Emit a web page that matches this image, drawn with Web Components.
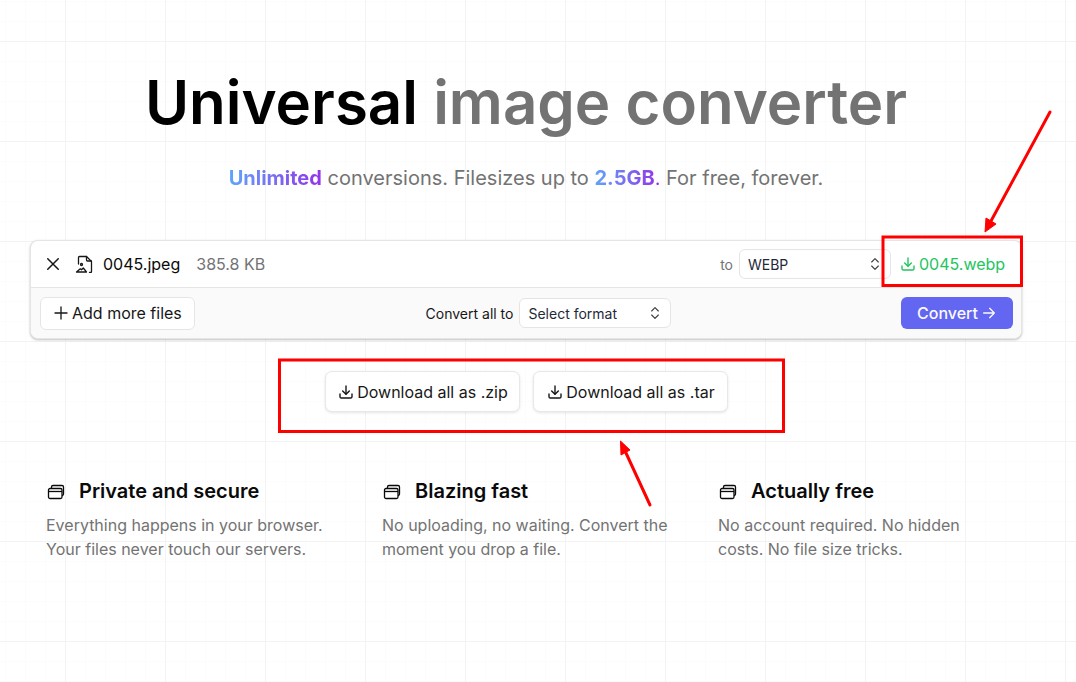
<!doctype html>
<html>
<head>
<meta charset="utf-8">
<title>Universal image converter</title>
<style>
  html, body { margin: 0; height: 100%; }
  body {
    width: 1076px;
    height: 682px;
    overflow: hidden;
    position: relative;
    background-color: #fff;
    background-image:
      linear-gradient(#f3f3f3 1px, transparent 1px),
      linear-gradient(90deg, #f3f3f3 1px, transparent 1px),
      linear-gradient(#fcfcfc 1px, transparent 1px),
      linear-gradient(90deg, #fcfcfc 1px, transparent 1px);
    background-size: 100px 100px, 100px 100px, 20px 20px, 20px 20px;
    background-position: 0 41px, 65px 0, 0 1px, 5px 0;
    font-family: Inter, "Liberation Sans", sans-serif;
    color: #0a0a0a;
  }
  main { width: 992px; margin-left: 30px; display: flex; flex-direction: column; }
</style>
</head>
<body>
<main>
  <uc-hero></uc-hero>
  <uc-file-card></uc-file-card>
  <uc-downloads></uc-downloads>
  <div style="display:grid;grid-template-columns:repeat(3,336px);padding:0 0 0 16px;margin-top:65px">
    <uc-feature title-text="Private and secure">Everything happens in your browser.<br>Your files never touch our servers.</uc-feature>
    <uc-feature title-text="Blazing fast">No uploading, no waiting. Convert the<br>moment you drop a file.</uc-feature>
    <uc-feature title-text="Actually free">No account required. No hidden<br>costs. No file size tricks.</uc-feature>
  </div>
</main>
<uc-annotations></uc-annotations>

<script>
  const downloadIcon = (size) => `<svg width="${size}" height="${size}" viewBox="0 0 24 24" fill="none" stroke="currentColor" stroke-width="2.1" stroke-linecap="round" stroke-linejoin="round"><path d="M12 3v12"/><path d="M7 10.5l5 5 5-5"/><path d="M3 15v4a2 2 0 0 0 2 2h14a2 2 0 0 0 2-2v-4"/></svg>`;

  class UcHero extends HTMLElement {
    constructor() {
      super();
      this.attachShadow({mode: 'open'}).innerHTML = `
        <style>
          :host { display: block; text-align: center; height: 240px; }
          h1 { margin: 0; padding-top: 63px; font-size: 60px; line-height: 78px; font-weight: 600; color: #000; }
          h1 span { color: #737373; }
          p { margin: 0; padding-top: 23px; font-size: 20px; line-height: 28px; color: #737373; }
          b { font-weight: 700; background: linear-gradient(90deg, #60a5fa, #9333ea); -webkit-background-clip: text; background-clip: text; color: transparent; }
          i { font-style: normal; font-weight: 400; }
        </style>
        <h1>Universal <span>image converter</span></h1>
        <p><b>Unlimited</b> conversions. Filesizes up to <b>2.5GB<i>.</i></b> For free, forever.</p>`;
    }
  }

  class UcSelect extends HTMLElement {
    constructor() {
      super();
      this.attachShadow({mode: 'open'}).innerHTML = `
        <style>
          :host { display: flex; align-items: center; justify-content: space-between; box-sizing: border-box; width: 152px; height: 30px; padding: 0 7px 0 8px; background: #fff; border: 1px solid #e5e5e5; border-radius: 6px; font-size: 14px; color: #1f2937; }
          svg { display: block; }
        </style>
        <slot></slot>
        <svg width="16" height="16" viewBox="0 0 24 24" fill="none" stroke="#404040" stroke-width="1.75" stroke-linecap="round" stroke-linejoin="round"><path d="M7 15l5 5 5-5"/><path d="M7 9l5-5 5 5"/></svg>`;
    }
  }

  class UcFileCard extends HTMLElement {
    constructor() {
      super();
      this.attachShadow({mode: 'open'}).innerHTML = `
        <style>
          :host { display: block; box-sizing: border-box; height: 99px; background: #fff; border: 1px solid #e5e5e5; border-radius: 8px; box-shadow: 0 1px 3px rgba(0,0,0,.16), 0 1px 2px rgba(0,0,0,.1); overflow: hidden; }
          .row { display: flex; align-items: center; }
          .file { height: 46px; padding: 0 7px 0 13px; }
          .file svg { display: block; flex: none; }
          .name { font-size: 16px; margin-left: 10px; color: #0a0a0a; }
          .size { font-size: 16px; margin-left: 16px; color: #737373; }
          .to { font-size: 14px; margin-left: auto; margin-right: 6px; color: #737373; }
          .link { display: flex; align-items: center; gap: 3px; width: 123px; padding-left: 9px; font-size: 16px; color: #22c55e; box-sizing: border-box; }
          .bar { height: 51px; background: #fafafa; border-top: 1px solid #e5e5e5; padding: 0 8px 0 9px; justify-content: space-between; box-sizing: border-box; }
          .add { display: flex; align-items: center; gap: 3px; box-sizing: border-box; width: 155px; height: 33px; padding-left: 12px; background: #fff; border: 1px solid #e5e5e5; border-radius: 6px; font-size: 16px; color: #171717; }
          .all { display: flex; align-items: center; gap: 6px; margin-left: 1px; font-size: 14px; color: #171717; }
          .go { display: flex; align-items: center; justify-content: center; gap: 3px; width: 112px; height: 32px; border-radius: 6px; background: #6366f1; color: #fafafa; font-size: 16px; font-weight: 500; }
        </style>
        <div class="row file">
          <svg width="18" height="18" viewBox="0 0 24 24" fill="none" stroke="#171717" stroke-width="2" stroke-linecap="round"><path d="M5 5l14 14M19 5L5 19"/></svg>
          <svg style="margin-left:13px" width="18" height="18" viewBox="0 0 18 18" fill="none" stroke="#171717" stroke-width="1.3" stroke-linecap="round" stroke-linejoin="round"><path d="M3.5 9V2.5a1 1 0 0 1 1-1h7l5 5v10a1 1 0 0 1-1 1h-1"/><path d="M11.5 1.5V5a1 1 0 0 0 1 1h4"/><circle cx="6.5" cy="9.5" r="1"/><path d="M1.5 17h10l-3.2-4-1.8 1.8-1.2-1z"/></svg>
          <span class="name">0045.jpeg</span>
          <span class="size">385.8 KB</span>
          <span class="to">to</span>
          <uc-select>WEBP</uc-select>
          <span class="link">${downloadIcon(16)}0045.webp</span>
        </div>
        <div class="row bar">
          <div class="add"><svg width="16" height="16" viewBox="0 0 24 24" fill="none" stroke="#171717" stroke-width="2" stroke-linecap="round"><path d="M12 3v18M3 12h18"/></svg>Add more files</div>
          <div class="all">Convert all to <uc-select>Select format</uc-select></div>
          <div class="go">Convert <svg width="16" height="16" viewBox="0 0 24 24" fill="none" stroke="currentColor" stroke-width="2" stroke-linecap="round" stroke-linejoin="round"><path d="M4 12h16M13 5l7 7-7 7"/></svg></div>
        </div>`;
    }
  }

  class UcDownloads extends HTMLElement {
    constructor() {
      super();
      this.attachShadow({mode: 'open'}).innerHTML = `
        <style>
          :host { display: flex; justify-content: center; gap: 13px; margin-top: 32px; }
          .b { display: flex; align-items: center; gap: 3px; box-sizing: border-box; width: 195px; height: 41px; padding-left: 2px; justify-content: center; background: #fff; border: 1px solid #e8e8e8; border-radius: 7px; box-shadow: 0 1px 3px rgba(0,0,0,.1); font-size: 16px; color: #171717; }
        </style>
        <div class="b">${downloadIcon(16)}Download all as .zip</div>
        <div class="b">${downloadIcon(16)}Download all as .tar</div>`;
    }
  }

  class UcFeature extends HTMLElement {
    constructor() {
      super();
      const title = this.getAttribute('title-text');
      this.attachShadow({mode: 'open'}).innerHTML = `
        <style>
          :host { display: block; }
          h3 { display: flex; align-items: center; gap: 13px; margin: 0; font-size: 20px; line-height: 28px; font-weight: 600; color: #0a0a0a; }
          p { margin: 8px 0 0; font-size: 16px; line-height: 24px; color: #737373; }
          svg { display: block; flex: none; }
        </style>
        <h3><svg width="20" height="18" viewBox="0 0 20 18" fill="none" stroke="#0a0a0a" stroke-width="1.3" stroke-linejoin="round"><rect x="2.5" y="6.5" width="13.5" height="10" rx="1.5"/><path d="M2.5 9.5H16"/><path d="M5.5 6V5a1.5 1.5 0 0 1 1.5-1.5h9A1.5 1.5 0 0 1 17.5 5v7a1.5 1.5 0 0 1-1.5 1.5"/></svg>${title}</h3>
        <p><slot></slot></p>`;
    }
  }

  class UcAnnotations extends HTMLElement {
    constructor() {
      super();
      this.attachShadow({mode: 'open'}).innerHTML = `
        <style>
          :host { position: absolute; left: 0; top: 0; width: 1076px; height: 682px; pointer-events: none; }
          svg { display: block; }
        </style>
        <svg width="1076" height="682" fill="none" stroke="#f00" stroke-width="3">
          <rect x="883" y="237" width="138.5" height="48.5"/>
          <rect x="279.5" y="360" width="504" height="71.5"/>
          <path d="M1050 112L991 221" stroke-linecap="round"/>
          <path d="M985 232l1-14 10 6z" fill="#f00" stroke-width="1"/>
          <path d="M650 505L626 453" stroke-linecap="round"/>
          <path d="M620.5 441l.5 14 9-5z" fill="#f00" stroke-width="1"/>
        </svg>`;
    }
  }

  customElements.define('uc-hero', UcHero);
  customElements.define('uc-select', UcSelect);
  customElements.define('uc-file-card', UcFileCard);
  customElements.define('uc-downloads', UcDownloads);
  customElements.define('uc-feature', UcFeature);
  customElements.define('uc-annotations', UcAnnotations);
</script>
</body>
</html>
